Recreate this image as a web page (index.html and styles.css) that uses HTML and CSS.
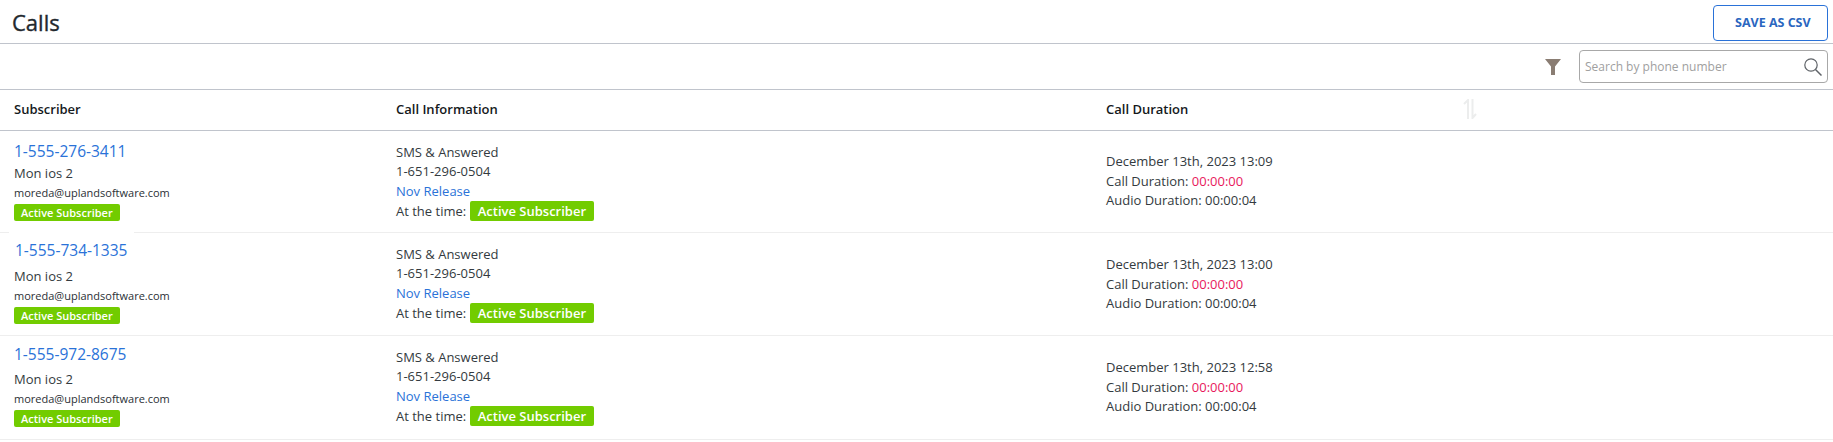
FILE: index.html
```html
<!DOCTYPE html>
<html lang="en">
<head>
<meta charset="utf-8">
<title>Calls</title>
<link rel="stylesheet" href="styles.css">
</head>
<body>
<header class="page-head">
  <h1 class="title">Calls</h1>
  <button class="csv-btn">SAVE AS CSV</button>
</header>
<div class="toolbar">
  <svg class="filter" viewBox="0 0 16 16" width="16" height="16"><path d="M0 0h16L10 7.500V16H6V7.500z" fill="#8a7d73"/></svg>
  <div class="search">
    <span class="placeholder">Search by phone number</span>
    <svg class="lens" viewBox="0 0 18 18" width="18" height="18"><circle cx="7" cy="7" r="6.200" fill="none" stroke="#5f6368" stroke-width="1.200"/><path d="M11.500 11.500L17.500 17.500" stroke="#5f6368" stroke-width="1.500" fill="none"/></svg>
  </div>
</div>
<div class="table">
  <div class="row head">
    <div class="c1">Subscriber</div>
    <div class="c2">Call Information</div>
    <div class="c3">Call Duration</div>
    <svg class="sort" viewBox="0 0 14 20" width="14" height="20"><path d="M5 20V1L1 5M9.500 0v19l3.500-4" fill="none" stroke="#eceded" stroke-width="2"/></svg>
  </div>

  <div class="row item first">
    <div class="c1 sub">
      <a class="phone">1-555-276-3411</a>
      <div class="name">Mon ios 2</div>
      <div class="mail">moreda@uplandsoftware.com</div>
      <span class="tag small">Active Subscriber</span>
    </div>
    <div class="c2 info">
      <div>SMS &amp; Answered</div>
      <div>1-651-296-0504</div>
      <a class="link">Nov Release</a>
      <div class="time">At the time: <span class="tag">Active Subscriber</span></div>
    </div>
    <div class="c3 dur">
      <div>December 13th, 2023 13:09</div>
      <div>Call Duration: <span class="red">00:00:00</span></div>
      <div>Audio Duration: 00:00:04</div>
    </div>
  </div>

  <div class="row item second">
    <div class="c1 sub">
      <a class="phone">1-555-734-1335</a>
      <div class="name">Mon ios 2</div>
      <div class="mail">moreda@uplandsoftware.com</div>
      <span class="tag small">Active Subscriber</span>
    </div>
    <div class="c2 info">
      <div>SMS &amp; Answered</div>
      <div>1-651-296-0504</div>
      <a class="link">Nov Release</a>
      <div class="time">At the time: <span class="tag">Active Subscriber</span></div>
    </div>
    <div class="c3 dur">
      <div>December 13th, 2023 13:00</div>
      <div>Call Duration: <span class="red">00:00:00</span></div>
      <div>Audio Duration: 00:00:04</div>
    </div>
  </div>

  <div class="row item third">
    <div class="c1 sub">
      <a class="phone">1-555-972-8675</a>
      <div class="name">Mon ios 2</div>
      <div class="mail">moreda@uplandsoftware.com</div>
      <span class="tag small">Active Subscriber</span>
    </div>
    <div class="c2 info">
      <div>SMS &amp; Answered</div>
      <div>1-651-296-0504</div>
      <a class="link">Nov Release</a>
      <div class="time">At the time: <span class="tag">Active Subscriber</span></div>
    </div>
    <div class="c3 dur">
      <div>December 13th, 2023 12:58</div>
      <div>Call Duration: <span class="red">00:00:00</span></div>
      <div>Audio Duration: 00:00:04</div>
    </div>
  </div>
</div>
</body>
</html>
```

FILE: styles.css
```css
* { box-sizing: border-box; }
html, body { margin: 0; padding: 0; background: #fff; }
body {
  font-family: "Open Sans", sans-serif;
  color: #333a40;
  font-size: 13px;
  overflow: hidden;
  height: 442px;
}
.page-head {
  height: 44px;
  border-bottom: 1px solid #c0c4cc;
  display: flex;
  align-items: center;
  justify-content: space-between;
  padding: 0 5px 0 12px;
}
.title { margin: 0; font-size: 22px; font-weight: 400; color: #22282e; -webkit-text-stroke: 0.35px #22282e; }
.csv-btn {
  width: 115px;
  height: 36px;
  background: #fff;
  border: 1px solid #2a72d8;
  border-radius: 4px;
  color: #2a66c0;
  font: 700 12.500px "Open Sans", sans-serif;
  padding: 0 0 0 21px;
  text-align: left;
  margin-top: 2px;
}
.toolbar {
  height: 46px;
  border-bottom: 1px solid #c0c4cc;
  display: flex;
  align-items: center;
  justify-content: flex-end;
  padding: 0 5px 0 0;
  gap: 18px;
}
.search {
  width: 249px;
  height: 33px;
  border: 1px solid #a8a8a8;
  border-radius: 4px;
  display: flex;
  align-items: center;
  justify-content: space-between;
  padding: 0 5px;
  color: #a0a0a0;
  font-size: 12px;
}
.row { display: flex; }
.c1 { width: 396px; padding-left: 14px; }
.c2 { width: 710px; }
.c3 { width: 357px; }
.head {
  height: 41px;
  align-items: center;
  padding-bottom: 2px;
  border-bottom: 1px solid #c0c4cc;
  font-weight: 600;
  color: #15191c;
}
.item { border-bottom: 1px solid #eeeeee; }
.first { height: 102px; }
.second { height: 103px; }
.third { height: 104px; }
.phone { color: #2a72d8; font-size: 15.500px; display: block; line-height: 22px; }
.sub { padding-top: 9px; }
.name { line-height: 20px; margin-top: 1px; }
.mail { font-size: 11px; line-height: 20px; color: #2b3035; }
.tag {
  display: inline-block;
  background: #72cc00;
  color: #fff;
  font-weight: 600;
  border-radius: 2px;
  padding: 0 7.500px;
  line-height: 20px;
}
.tag.small { font-size: 11px; padding: 0 7px; line-height: 17px; margin-top: 1px; vertical-align: top; }
.second .sub { padding-top: 0; }
.second .phone {
  position: relative;
  width: 125px;
  margin: -1px 0 5px -5px;
  padding: 7px 0 0 6px;
  height: 29px;
  background: #fff;
}
.second .name { margin-top: 0; }
.third .sub { padding-top: 7px; }
.third .name { margin-top: 4px; }
.third .tag.small { margin-top: 1px; }
.info { padding-top: 11px; line-height: 20px; }
.info > div, .info > a { display: block; }
.info > div:nth-child(2) { line-height: 19px; }
.info > a { line-height: 20px; }
.link { color: #2a72d8; }
.info > .time { display: flex; align-items: center; gap: 4px; }
.dur { align-self: center; line-height: 20px; padding-bottom: 2px; }
.dur div:last-child { line-height: 19px; }
.red { color: #e8185c; }
```
